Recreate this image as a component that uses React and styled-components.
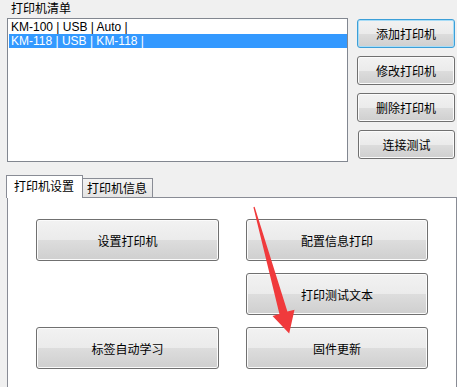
import React from 'react'
import styled, { createGlobalStyle, css } from 'styled-components'

const GlobalStyle = createGlobalStyle`
  html, body {
    margin: 0;
    padding: 0;
    background: #f0f0f0;
  }
  body {
    font-family: "Noto Sans CJK SC", "Liberation Sans", sans-serif;
    font-size: 12px;
    color: #000;
  }
`

const Window = styled.div`
  position: relative;
  width: 457px;
  height: 387px;
  overflow: hidden;
  background: #f0f0f0;
`

const TopArea = styled.div`
  display: flex;
  padding-left: 7px;
`

const ListColumn = styled.div`
  display: flex;
  flex-direction: column;
  width: 341px;
`

const GroupLabel = styled.div`
  height: 18px;
  line-height: 16px;
  padding-left: 4px;
  font-size: 12px;
`

const ListBox = styled.div`
  box-sizing: border-box;
  height: 144px;
  border: 1px solid #828790;
  background: #fff;
  padding: 1px 0 0 1px;
`

const ListRow = styled.div`
  height: 14px;
  line-height: 14px;
  padding-left: 2px;
  font-family: "Liberation Sans", "Noto Sans CJK SC", sans-serif;
  font-size: 12px;
  white-space: pre;
  ${props =>
    props.selected &&
    css`
      background: #3399ff;
      color: #fff;
    `}
`

const ButtonColumn = styled.div`
  display: flex;
  flex-direction: column;
  gap: 8px;
  margin-left: 9px;
  padding-top: 19px;
  width: 98px;
`

const buttonFace = css`
  box-sizing: border-box;
  border: 1px solid #707070;
  border-radius: 3px;
  background: linear-gradient(
    to bottom,
    #f2f2f2 0%,
    #ebebeb 50%,
    #dddddd 50%,
    #cfcfcf 100%
  );
  box-shadow: inset 0 0 0 1px #fbfbfb;
  font-family: "Noto Sans CJK SC", sans-serif;
  font-size: 12px;
  color: #000;
  display: flex;
  align-items: center;
  justify-content: center;
  padding: 0;
`

const SideButton = styled.button`
  ${buttonFace}
  height: 29px;
  width: ${props => (props.narrow ? '97px' : '98px')};
  margin-left: ${props => (props.narrow ? '1px' : '0')};
  ${props =>
    props.focused &&
    css`
      border-color: #3c9fd8;
      box-shadow: inset 0 0 0 1px #a8dcf6;
    `}
`

const TabArea = styled.div`
  margin-top: 13px;
  padding-left: 6px;
`

const TabStrip = styled.div`
  display: flex;
  align-items: flex-end;
  height: 22px;
  position: relative;
  z-index: 1;
`

const Tab = styled.div`
  box-sizing: border-box;
  border: 1px solid #898c95;
  border-bottom: none;
  font-size: 12px;
  line-height: 18px;
  ${props =>
    props.active
      ? css`
          height: 23px;
          padding: 1px 8px 0 7px;
          background: #fff;
          margin-bottom: -1px;
        `
      : css`
          height: 19px;
          padding: 0 5px 0 4px;
          margin-left: -1px;
          background: linear-gradient(to bottom, #f3f3f3, #e4e4e4);
          line-height: 18px;
        `}
`

const TabPanel = styled.div`
  box-sizing: border-box;
  margin-left: 1px;
  width: 450px;
  height: 200px;
  border: 1px solid #898c95;
  background: #fff;
  padding: 21px 0 0 28px;
  display: grid;
  grid-template-columns: 183px 182px;
  grid-auto-rows: 42px;
  column-gap: 27px;
  row-gap: 12px;
`

const PanelButton = styled.button`
  ${buttonFace}
  grid-column: ${props => props.col};
  grid-row: ${props => props.row};
  height: 42px;
`

const ArrowOverlay = styled.svg`
  position: absolute;
  left: 0;
  top: 0;
  pointer-events: none;
`

const printers = [
  { name: 'KM-100 | USB | Auto |', selected: false },
  { name: 'KM-118 | USB | KM-118 |', selected: true },
]

const panelButtons = [
  { label: '设置打印机', col: 1, row: 1 },
  { label: '配置信息打印', col: 2, row: 1 },
  { label: '打印测试文本', col: 2, row: 2 },
  { label: '标签自动学习', col: 1, row: 3 },
  { label: '固件更新', col: 2, row: 3 },
]

export default function App() {
  return (
    <Window>
      <GlobalStyle />
      <TopArea>
        <ListColumn>
          <GroupLabel>打印机清单</GroupLabel>
          <ListBox>
            {printers.map(p => (
              <ListRow key={p.name} selected={p.selected}>
                {p.name}
              </ListRow>
            ))}
          </ListBox>
        </ListColumn>
        <ButtonColumn>
          <SideButton focused>添加打印机</SideButton>
          <SideButton>修改打印机</SideButton>
          <SideButton>删除打印机</SideButton>
          <SideButton narrow>连接测试</SideButton>
        </ButtonColumn>
      </TopArea>
      <TabArea>
        <TabStrip>
          <Tab active>打印机设置</Tab>
          <Tab>打印机信息</Tab>
        </TabStrip>
        <TabPanel>
          {panelButtons.map(b => (
            <PanelButton key={b.label} col={b.col} row={b.row}>
              {b.label}
            </PanelButton>
          ))}
        </TabPanel>
      </TabArea>
      <ArrowOverlay width="457" height="387" viewBox="0 0 457 387">
        <polygon
          points="253.4,207.3 254.6,206.8 287.4,311.6 294.5,309.7 289.2,333.5 272.5,316 279.4,313.9"
          fill="#f03a3c"
        />
      </ArrowOverlay>
    </Window>
  )
}
